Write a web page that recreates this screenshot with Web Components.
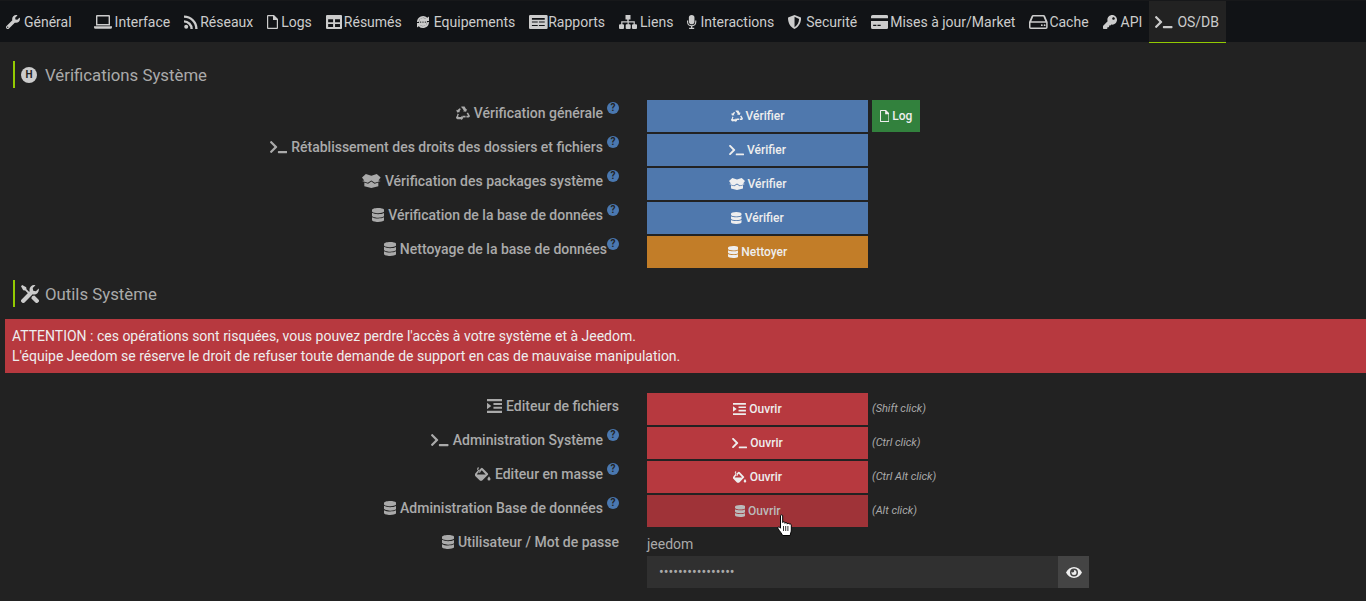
<!DOCTYPE html>
<html lang="fr">
<head>
<meta charset="utf-8">
<title>Configuration</title>
<style>
  html, body { margin: 0; background: #222; overflow: hidden; }
  body { font-family: Roboto, "Liberation Sans", sans-serif; font-size: 14px; color: #ccc; }
</style>
</head>
<body>
<jd-page>
  <jd-tabs>
    <jd-tab icon="wrench" w="18" after="8">Général</jd-tab>
    <jd-tab icon="laptop" w="21">Interface</jd-tab>
    <jd-tab icon="rss" w="16">Réseaux</jd-tab>
    <jd-tab icon="file" w="14">Logs</jd-tab>
    <jd-tab icon="table" w="18">Résumés</jd-tab>
    <jd-tab icon="sync" w="18">Equipements</jd-tab>
    <jd-tab icon="news" w="19">Rapports</jd-tab>
    <jd-tab icon="sitemap" w="21">Liens</jd-tab>
    <jd-tab icon="mic" w="13">Interactions</jd-tab>
    <jd-tab icon="shield" w="18">Securité</jd-tab>
    <jd-tab icon="card" w="19">Mises à jour/Market</jd-tab>
    <jd-tab icon="hdd" w="20">Cache</jd-tab>
    <jd-tab icon="key" w="18">API</jd-tab>
    <jd-tab icon="terminal" w="22" active>OS/DB</jd-tab>
  </jd-tabs>

  <jd-title badge="H" style="margin-top:19px">Vérifications Système</jd-title>
  <jd-rows style="margin-top:12px">
    <jd-row icon="recycle" label="Vérification générale" help>
      <jd-btn icon="recycle" color="blue">Vérifier</jd-btn>
      <jd-btn slot="after" icon="file" color="green" small>Log</jd-btn>
    </jd-row>
    <jd-row icon="terminal" label="Rétablissement des droits des dossiers et fichiers" help>
      <jd-btn icon="terminal" color="blue">Vérifier</jd-btn>
    </jd-row>
    <jd-row icon="box" label="Vérification des packages système" help>
      <jd-btn icon="box" color="blue">Vérifier</jd-btn>
    </jd-row>
    <jd-row icon="database" label="Vérification de la base de données" help>
      <jd-btn icon="database" color="blue">Vérifier</jd-btn>
    </jd-row>
    <jd-row icon="database" label="Nettoyage de la base de données" help="tight">
      <jd-btn icon="database" color="orange">Nettoyer</jd-btn>
    </jd-row>
  </jd-rows>

  <jd-title icon="tools" style="margin-top:12px">Outils Système</jd-title>
  <jd-alert>ATTENTION : ces opérations sont risquées, vous pouvez perdre l'accès à votre système et à Jeedom.<br>L'équipe Jeedom se réserve le droit de refuser toute demande de support en cas de mauvaise manipulation.</jd-alert>
  <jd-rows style="margin-top:20px">
    <jd-row icon="indent" label="Editeur de fichiers">
      <jd-btn icon="indent" color="red">Ouvrir</jd-btn>
      <jd-note slot="after">(Shift click)</jd-note>
    </jd-row>
    <jd-row icon="terminal" label="Administration Système" help>
      <jd-btn icon="terminal" color="red">Ouvrir</jd-btn>
      <jd-note slot="after">(Ctrl click)</jd-note>
    </jd-row>
    <jd-row icon="fill" label="Editeur en masse" help>
      <jd-btn icon="fill" color="red">Ouvrir</jd-btn>
      <jd-note slot="after">(Ctrl Alt click)</jd-note>
    </jd-row>
    <jd-row icon="database" label="Administration Base de données" help>
      <jd-btn icon="database" color="red" hover>Ouvrir</jd-btn>
      <jd-note slot="after">(Alt click)</jd-note>
    </jd-row>
    <jd-row icon="database" label="Utilisateur / Mot de passe">
      <jd-plain>jeedom</jd-plain>
    </jd-row>
  </jd-rows>
  <jd-password></jd-password>
  <jd-cursor></jd-cursor>
</jd-page>

<script>
// every icon is drawn in its own viewBox, filled with currentColor
const ICONS = {
  terminal: ['0 0 640 512', '<path d="M257.981 272.971L63.638 467.314c-9.373 9.373-24.569 9.373-33.941 0L7.029 444.647c-9.357-9.357-9.375-24.522-.04-33.901L161.011 256 6.99 101.255c-9.335-9.379-9.317-24.544.04-33.901l22.667-22.667c9.373-9.373 24.569-9.373 33.941 0L257.981 239.03c9.373 9.372 9.373 24.568 0 33.941zM640 456v-32c0-13.255-10.745-24-24-24H312c-13.255 0-24 10.745-24 24v32c0 13.255 10.745 24 24 24h304c13.255 0 24-10.745 24-24z"/>'],
  database: ['0 0 448 512', '<path d="M448 73.143v45.714C448 159.143 347.667 192 224 192S0 159.143 0 118.857V73.143C0 32.857 100.333 0 224 0s224 32.857 224 73.143zM448 176v102.857C448 319.143 347.667 352 224 352S0 319.143 0 278.857V176c48.125 33.143 136.208 48.572 224 48.572S399.874 209.143 448 176zm0 160v102.857C448 479.143 347.667 512 224 512S0 479.143 0 438.857V336c48.125 33.143 136.208 48.572 224 48.572S399.874 369.143 448 336z"/>'],
  wrench: ['0 0 512 512', '<path d="M507.73 109.1c-2.24-9.03-13.54-12.09-20.12-5.51l-74.36 74.36-67.88-11.31-11.31-67.88 74.36-74.36c6.62-6.62 3.43-17.9-5.66-20.16-47.38-11.74-99.55.91-136.58 37.93-39.64 39.64-50.55 97.1-34.05 147.2L18.74 402.76c-24.99 24.99-24.99 65.51 0 90.5 24.99 24.99 65.51 24.99 90.5 0l213.21-213.21c50.12 16.71 107.47 5.68 147.37-34.22 37.07-37.07 49.7-89.32 37.91-136.73zM64 472c-13.25 0-24-10.75-24-24 0-13.26 10.75-24 24-24s24 10.74 24 24c0 13.25-10.75 24-24 24z"/>'],
  key: ['0 0 512 512', '<path d="M512 176.001C512 273.203 433.202 352 336 352c-11.22 0-22.19-1.062-32.827-3.069l-24.012 27.014A23.999 23.999 0 0 1 261.223 384H224v40c0 13.255-10.745 24-24 24h-40v40c0 13.255-10.745 24-24 24H24c-13.255 0-24-10.745-24-24v-78.059c0-6.365 2.529-12.47 7.029-16.971l161.802-161.802C163.108 213.814 160 195.271 160 176 160 78.798 238.797.001 335.999 0 433.488-.001 512 78.511 512 176.001zM336 128c0 26.51 21.49 48 48 48s48-21.49 48-48-21.49-48-48-48-48 21.49-48 48z"/>'],
  laptop: ['0 0 18 14', '<path fill-rule="evenodd" d="M3 0h12a1 1 0 0 1 1 1v9.500H2V1a1 1 0 0 1 1-1zm.4 1.400v7.700h11.200V1.400zM0 11.200h18v1a1.500 1.500 0 0 1-1.500 1.500h-15A1.500 1.500 0 0 1 0 12.200z"/>'],
  rss: ['0 0 14 14', '<circle cx="2.200" cy="11.800" r="2"/><path d="M0 5.200a8.800 8.800 0 0 1 8.800 8.800H6.400A6.400 6.400 0 0 0 0 7.600zM0 .4A13.600 13.600 0 0 1 13.600 14h-2.400A11.200 11.200 0 0 0 0 2.800z"/>'],
  file: ['0 0 11 14', '<path fill-rule="evenodd" d="M1 0h6l4 4v9a1 1 0 0 1-1 1H1a1 1 0 0 1-1-1V1a1 1 0 0 1 1-1zm.2 1.200v11.600h8.600V5H6V1.200z"/>'],
  table: ['0 0 15 13', '<path fill-rule="evenodd" d="M1 0h13a1 1 0 0 1 1 1v11a1 1 0 0 1-1 1H1a1 1 0 0 1-1-1V1a1 1 0 0 1 1-1zm1 4v2.800h4.600V4zm6.400 0v2.800H13V4zM2 8.400v2.800h4.600V8.400zm6.400 0v2.800H13V8.400z"/>'],
  sync: ['0 0 14 14', '<path fill-rule="evenodd" d="M7 3a4 4 0 1 1 0 8 4 4 0 0 1 0-8zM4.700 6.400a.7.7 0 1 0 0 1.400.7.7 0 0 0 0-1.400zm2.300 0a.7.7 0 1 0 0 1.400.7.7 0 0 0 0-1.400zm2.300 0a.7.7 0 1 0 0 1.400.7.7 0 0 0 0-1.400z"/><path d="M1 7a6 6 0 0 1 10.300-4.200L13 1.500V6H8.500l1.600-1.800A4.400 4.400 0 0 0 2.600 7zM13 7a6 6 0 0 1-10.300 4.200L1 12.500V8h4.500l-1.600 1.800A4.400 4.400 0 0 0 11.400 7z"/>'],
  news: ['0 0 16 12', '<path fill-rule="evenodd" d="M1 0h14a1 1 0 0 1 1 1v10a1 1 0 0 1-1 1H1a1 1 0 0 1-1-1V1a1 1 0 0 1 1-1zm1.500 2.500v1.500h11V2.500zm0 3v1h5v-1zm6 0v1h5v-1zm-6 3v1h5v-1zm6 0v1h5v-1z"/>'],
  sitemap: ['0 0 18 14', '<path d="M6.500 0h5v4.500H9.700v1.700h6.100v3h1.200a1 1 0 0 1 1 1V13a1 1 0 0 1-1 1h-3a1 1 0 0 1-1-1v-2.800a1 1 0 0 1 1-1h.6V7.400H9.700v1.800h1a1 1 0 0 1 1 1V13a1 1 0 0 1-1 1h-3a1 1 0 0 1-1-1v-2.800a1 1 0 0 1 1-1h.9V7.400H3.400v1.800H4a1 1 0 0 1 1 1V13a1 1 0 0 1-1 1H1a1 1 0 0 1-1-1v-2.800a1 1 0 0 1 1-1h1.200v-3h6.100V4.500H6.500z"/>'],
  mic: ['0 0 10 15', '<rect x="2" y="0" width="6" height="10" rx="3"/><path d="M0 6h1.200v1.200a3.800 3.800 0 0 0 7.600 0V6H10v1.200a5 5 0 0 1-4.300 4.900v1.500h2V15H2.300v-1.400h2v-1.500A5 5 0 0 1 0 7.200z"/>'],
  shield: ['0 0 14 15', '<path fill-rule="evenodd" d="M7 0l6.300 2.500c.5.200.7.500.7 1 0 5.500-3 9.600-7 11.500C3 13.100 0 9 0 3.500c0-.5.200-.8.700-1zm0 2v11c2.700-1.600 4.700-4.600 4.900-8.700z"/>'],
  card: ['0 0 16 13', '<path d="M1.500 0h13A1.500 1.500 0 0 1 16 1.500V3H0V1.500A1.500 1.500 0 0 1 1.500 0zM0 5.500h16v6a1.500 1.500 0 0 1-1.500 1.500h-13A1.500 1.500 0 0 1 0 11.500zM2 9v1.200h3V9zm4 0v1.200h3V9z"/>'],
  hdd: ['0 0 16 12', '<path fill-rule="evenodd" d="M3.500 0h9c.6 0 1 .3 1.300.8L16 6v4.500a1.500 1.500 0 0 1-1.500 1.500h-13A1.500 1.500 0 0 1 0 10.500V6L2.200.8C2.500.3 2.900 0 3.500 0zm.2 1.300L2 5.300h12l-1.700-4zM1.300 6.600v4.100h13.400V6.600zM11 7.900a.8.800 0 1 0 0 1.600.8.8 0 0 0 0-1.600zm2.400 0a.8.800 0 1 0 0 1.600.8.8 0 0 0 0-1.600z"/>'],
  recycle: ['0 0 14 14', '<path d="M5.200.6h3.400l1.700 2.800 1-.6-1.200 3-3.200-.5 1-.6-1.500-2.500-.6-.1zM3.600 2.200l1.200.7-1.500 2.500 1 .6-3.200.5L.2 3.700l1 .6zM12 6.400l1.700 3a1.500 1.500 0 0 1-1.300 2.200h-2v-1.800h1.700l-1.500-2.500zM1.600 7.600L3 8.500l-1 1.400.6 1h2.700V9.700l2 2.400-2 2.400v-1.300H2.300A1.700 1.700 0 0 1 .8 10.200zM6.400 9.800h3.200v1.800H6.400z"/>'],
  box: ['0 0 16 12', '<path d="M2.500 3.600l5.500.8 5.500-.8-2.200 2.900-3.300-2 -3.300 2zM0 3l3.300-3L8 1.500 12.700 0 16 3l-1.900 2.600L16 6l-5 1.500-3-2-3 2L0 6l1.900-.4zM2 7.300l3.200 1 2.800-1.800 2.800 1.800 3.200-1v3.200L8 12l-6-1.500z"/>'],
  indent: ['0 0 14 13', '<path d="M0 0h14v2H0zM6 3.700h8v1.800H6zM6 7.300h8v1.800H6zM0 11h14v2H0zM0 3.500l4 3-4 3z"/>'],
  fill: ['0 0 16 14', '<path fill-rule="evenodd" d="M3 0l1.100 1.100L3 2.200l1 1L6 1.300a1.200 1.200 0 0 1 1.700 0l5 5a1.200 1.200 0 0 1 0 1.700l-5 5a2.400 2.400 0 0 1-3.400 0L.7 9.400a2.400 2.400 0 0 1 0-3.400L3 3.300 1.900 2.200zM2.400 6.600L2 7.500h8.700L6.800 3.200 5.600 4.400a1 1 0 1 1-.7-.7z"/><path d="M14 9.200c.6 1 1.500 1.800 1.500 2.800a1.500 1.500 0 0 1-3 0c0-1 .9-1.800 1.500-2.800z"/>'],
  tools: ['0 0 18 18', '<path d="M1.200 0l4 2.300.3 2 4.700 4.700-1.300 1.300L4.200 5.600l-2-.3L0 1.300zM13.400 10.400l4 4a1.800 1.800 0 0 1 0 2.600l-.4.400a1.800 1.800 0 0 1-2.600 0l-4-4a3 3 0 0 1 3-3z"/><path d="M17.700 3.500a4.800 4.800 0 0 1-6 5.800L3.600 17.400a1.900 1.900 0 0 1-2.700 0l-.3-.3a1.900 1.900 0 0 1 0-2.700L8.700 6.300a4.800 4.800 0 0 1 5.800-6L11.700 3.100l.5 2.700 2.700.5z"/>'],
  eye: ['0 0 16 11', '<path fill-rule="evenodd" d="M8 0c3.400 0 6.300 2.100 8 5.500C14.300 8.900 11.400 11 8 11S1.700 8.900 0 5.500C1.700 2.100 4.600 0 8 0zm0 1.500a4 4 0 1 0 0 8 4 4 0 0 0 0-8zM8 3a2.500 2.500 0 1 1-2.500 2.500c0-.3 0-.5.100-.7.300.4.700.6 1.200.6a1.400 1.400 0 0 0 1.400-1.400c0-.5-.2-.9-.6-1.200.1-.1.300.2.400.2z"/>'],
};

function iconSvg(name) {
  const [box, body] = ICONS[name];
  return `<svg viewBox="${box}" fill="currentColor" aria-hidden="true">${body}</svg>`;
}

function define(name, css, html, setup) {
  customElements.define(name, class extends HTMLElement {
    constructor() {
      super();
      this.attachShadow({ mode: 'open' });
    }
    connectedCallback() {
      this.shadowRoot.innerHTML = `<style>${css}</style>` + html(this);
      if (setup) setup(this);
    }
  });
}

define('jd-page', `:host { display: block; position: relative; height: 601px; }`, () => `<slot></slot>`);

define('jd-tabs', `
  :host { display: flex; height: 42px; padding-left: 0; background: #111316; border-top: 1px solid #17181a; box-sizing: border-box; margin-bottom: 1px; }
`, () => `<slot></slot>`);

define('jd-tab', `
  :host { display: flex; align-items: center; height: 42px; padding: 0 7px 0 6px; box-sizing: border-box; color: #ccc; font-size: 14px; white-space: nowrap; margin-left: 1px; }
  :host(:first-child) { margin-left: 0; }
  :host([active]) { background: #222; border-bottom: 1px solid #93ca02; margin-left: 0; }
  .i { display: flex; flex: none; align-items: center; }
  svg { height: 14px; display: block; }
`, el => `<span class="i" style="width:${el.getAttribute('w')}px">${iconSvg(el.getAttribute('icon'))}</span><slot></slot>`,
el => {
  if (el.hasAttribute('after')) el.style.marginRight = el.getAttribute('after') + 'px';
});

define('jd-title', `
  :host { display: flex; align-items: center; height: 27px; margin-left: 13px; padding-left: 6px; border-left: 2px solid #93ca02; color: #aaa; font-size: 16.800px; }
  .ic { width: 24px; flex: none; display: flex; color: #ccc; }
  .badge { width: 16px; height: 16px; border-radius: 50%; background: #ccc; color: #222; font: 700 10px/16px Roboto, sans-serif; text-align: center; }
  svg { width: 18px; height: 18px; display: block; }
`, el => {
  const mark = el.hasAttribute('badge')
    ? `<span class="badge">${el.getAttribute('badge')}</span>`
    : iconSvg(el.getAttribute('icon'));
  return `<span class="ic">${mark}</span><slot></slot>`;
});

define('jd-rows', `:host { display: flex; flex-direction: column; gap: 2px; }`, () => `<slot></slot>`);

define('jd-row', `
  :host { display: grid; grid-template-columns: 619px 221px auto; column-gap: 0; min-height: 32px; }
  .label { display: flex; justify-content: flex-end; align-items: flex-start; color: #aaa; font-weight: 500; line-height: 20px; padding-top: 3px; white-space: nowrap; }
  .ic { margin-right: 4px; display: flex; height: 20px; align-items: center; }
  .ic svg { height: 14px; display: block; }
  .help { width: 12px; height: 12px; border-radius: 50%; background: #4a78b0; color: #222; font: 700 10px/12px Roboto, sans-serif; text-align: center; margin: -1px 0 0 4px; }
  .help.tight { margin-left: 0; }
  .main { grid-column: 2; margin-left: 28px; width: 221px; }
  .after { margin-left: 32px; }
`, el => {
  const help = el.getAttribute('help');
  return `<div class="label"><span class="ic">${iconSvg(el.getAttribute('icon'))}</span>${el.getAttribute('label')}` +
    (help !== null ? `<span class="help ${help}">?</span>` : '') +
    `</div><div class="main"><slot></slot></div><div class="after"><slot name="after"></slot></div>`;
});

const BTN_COLORS = { blue: '#4f78ad', orange: '#c27d28', red: '#b7393f', green: '#32813d' };

define('jd-btn', `
  :host { display: flex; align-items: center; justify-content: center; height: 32px; color: #eee; font-size: 12px; font-weight: 500; white-space: nowrap; }
  :host([small]) { width: 48px; }
  :host([hover]) { color: #bbb; }
  svg { height: 12px; margin-right: 3px; display: block; }
`, el => iconSvg(el.getAttribute('icon')) + `<slot></slot>`,
el => {
  el.style.background = el.hasAttribute('hover') ? '#9f3338' : BTN_COLORS[el.getAttribute('color')];
});

define('jd-note', `
  :host { display: block; color: #aaa; font-size: 11px; font-style: italic; line-height: 32px; white-space: nowrap; }
`, () => `<slot></slot>`);

define('jd-plain', `
  :host { display: block; color: #aaa; font-size: 14px; line-height: 20px; padding-top: 5px; }
`, () => `<slot></slot>`);

define('jd-alert', `
  :host { display: block; margin: 12px 0 0 5px; padding: 7px; background: #b7393f; color: #eee; font-size: 14px; line-height: 20px; }
`, () => `<slot></slot>`);

define('jd-password', `
  :host { display: flex; width: 442px; height: 32px; margin: -5px 0 0 647px; }
  input { flex: 1; min-width: 0; border: 0; outline: 0; margin: 0; padding: 0 12px; background: #303030; color: #aaa; font: 14px Roboto, sans-serif; }
  .eye { width: 31px; flex: none; display: flex; align-items: center; justify-content: center; background: #444; color: #eee; }
  svg { width: 16px; display: block; }
`, () => `<input type="password" value="jeedomjeedom1234"><span class="eye">${iconSvg('eye')}</span>`);

// the mouse pointer lies over the hovered button
define('jd-cursor', `
  :host { position: absolute; left: 777px; top: 514px; width: 16px; height: 24px; }
  svg { display: block; width: 16px; height: 24px; }
`, () => `<svg viewBox="0 0 16 24"><path fill="#fff" stroke="#000" stroke-width="1" stroke-linejoin="round" d="M3.500 1.800c0-1.300 2.200-1.300 2.200 0v6.700c0-1 2.200-1 2.200 0v.8c0-1 2.200-1 2.200 0v.8c0-1 2.200-1 2.200 0 .6-.5 2 0 2 1v5c0 2-1 3-1 5.400H5.500c-.5-2-3-4.300-4.500-7-.6-1.200.6-2.300 1.700-1.300l.8 1z"/><path stroke="#000" stroke-width=".8" d="M6.500 12v5M8.700 12v5M10.900 12v5"/></svg>`);
</script>
</body>
</html>
